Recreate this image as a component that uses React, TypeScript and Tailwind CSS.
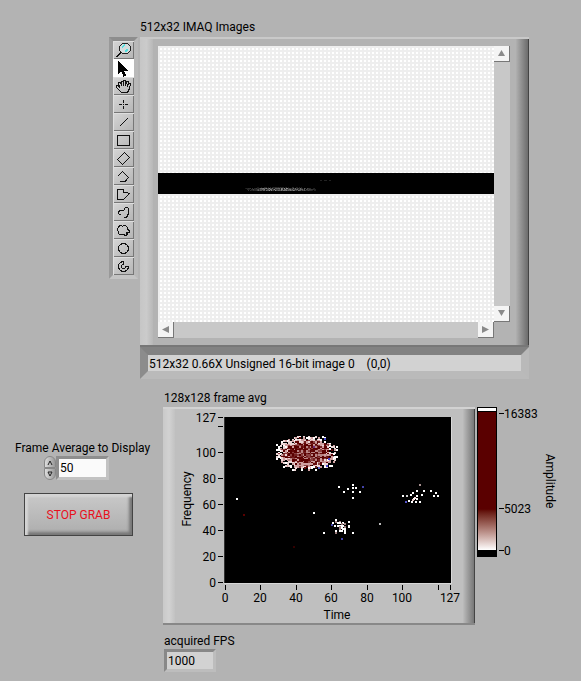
import React, { useId, useState } from "react";

const tools: { name: string; icon: React.ReactNode }[] = [
  {
    name: "Zoom",
    icon: (
      <>
        <circle cx="12" cy="7.5" r="5.5" fill="#d4dcdc" stroke="#222" />
        <path d="M9 6.500l3-3M12 10.500l3-2" stroke="#4fe0e0" strokeWidth="2" />
        <path d="M8 11.500l-4.500 4.500" stroke="#111" strokeWidth="2" />
      </>
    ),
  },
  {
    name: "Select",
    icon: <path d="M5 2v13l3-3 2.500 5.500 3-1-2.500-4.500h4z" fill="#000" stroke="none" />,
  },
  { name: "Pan", icon: <path d="M8.500 15.500l-5-5v-2h2l1 2-1-5h2l1 3v-4h2v4-5h2v5l1-4h2l-1 5 1-3h2l-1 5-2 4z" /> },
  { name: "Point", icon: <path d="M10.500 5v3M10.500 11v3M6 9.500h3M12 9.500h3M10 9.500h1" /> },
  { name: "Line", icon: <path d="M6.500 13.500l8-8" /> },
  { name: "Rectangle", icon: <rect x="4.500" y="4.500" width="12" height="10" /> },
  { name: "Rotated rectangle", icon: <path d="M4.500 10.500L11.500 3.500L16.500 8.500L9.500 15.500z" /> },
  { name: "Polyline", icon: <path d="M4.500 9.500l5-5 6 6-3 3.500H6.500" /> },
  { name: "Polygon", icon: <path d="M4.500 4.500h6v3h3l3 1-6 6h-6z" /> },
  { name: "Freehand line", icon: <path d="M7.500 11.500h-1l-1-1v-2l2-1h3l2-3h2l1 1v5l-2 4h-3" /> },
  {
    name: "Freehand region",
    icon: <path d="M6.500 4.500h2l1 1 1-1h2l2 2v2l2 1v2l-3 0 1 2-2 1-2-1h-4l-1-1v-2l-1-1v-2l1-1z" />,
  },
  { name: "Oval", icon: <circle cx="10.500" cy="9.500" r="5" /> },
  { name: "Annulus", icon: <path d="M10.500 4.500A5 5 0 1 0 15.500 9.500H12.500A2 2 0 1 1 10.500 7.500z" /> },
];

function ToolPalette() {
  const [active, setActive] = useState("Select");
  return (
    <div className="self-start border-4 border-t-[#8d8d8d] border-r-[#b9b9b9] border-b-[#c4c4c4] border-l-[#999]">
      <div role="toolbar" aria-label="Region tools" className="flex w-[21px] flex-col">
        {tools.map((t) => (
          <button
            key={t.name}
            type="button"
            aria-label={t.name}
            aria-pressed={active === t.name}
            onClick={() => setActive(t.name)}
            className={
              active === t.name
                ? "h-[18px] bg-white"
                : "h-[18px] bg-linear-to-br from-[#d6d6d6] to-[#b4b4b4] shadow-[inset_1px_1px_0_#dedede,inset_-1px_-1px_0_#777]"
            }
          >
            <svg
              width="21"
              height="18"
              fill="none"
              stroke="#111"
              strokeWidth="1"
              shapeRendering="crispEdges"
            >
              {t.icon}
            </svg>
          </button>
        ))}
      </div>
    </div>
  );
}

const arrowPaths = {
  up: "M7.500 4L11 10H4z",
  down: "M4 4h7l-3.500 6z",
  left: "M11 4v7L4 7.500z",
  right: "M4 4v7l7-3.500z",
};

function ScrollButton({ dir }: { dir: keyof typeof arrowPaths }) {
  return (
    <button
      type="button"
      aria-label={"Scroll " + dir}
      className="size-4 shrink-0 bg-[#f4f4f4] shadow-[inset_-1px_-1px_0_#777]"
    >
      <svg width="16" height="16" fill="#8a8a8a">
        <path d={arrowPaths[dir]} />
      </svg>
    </button>
  );
}

// Deterministic noise, so that every paint shows the same frame.
function noise(a: number, b: number) {
  const v = Math.sin(a * 127.1 + b * 311.7) * 43758.5453;
  return v - Math.floor(v);
}

function LineImage() {
  const marks: React.ReactNode[] = [];
  for (let x = 0; x < 84; x++) {
    for (let y = 14; y < 18; y++) {
      const level = Math.min(1, 1.4 * Math.max(0, 1 - Math.abs(x - 44) / 42)) * (y > 14 ? 1 : 0.3);
      const v = Math.round((0.2 + noise(x, y) * 0.8) * level * 150);
      if (v > 24) marks.push(<rect key={x + "-" + y} x={x} y={y} width="1" height="1" fill={`rgb(${v},${v},${v})`} />);
    }
  }
  return (
    <svg className="block pl-[78px]" width="180" height="21" shapeRendering="crispEdges">
      {marks}
      <path d="M84 7.500h2M88 7.500h3M93 7.500h2" stroke="#222" />
    </svg>
  );
}

function ImageDisplay() {
  return (
    <div className="min-w-0 flex-1">
      <div className="flex h-[310px] border-t-2 border-b-2 border-t-[#c9c9c9] border-b-[#777] bg-[#b3b3b3]">
        <div className="w-[13px] bg-linear-to-r from-[#c6c6c6] via-[#cbcbcb] to-[#b8b8b8]" />
        <div className="flex min-w-0 flex-1 pt-[7px] pl-[5px]">
          <div className="min-w-0 flex-1">
            <div className="flex h-[276px] flex-col bg-[conic-gradient(from_90deg,#fff_25%,#eee_0)] bg-[length:4px_4px] pt-[127px]">
              <div className="h-[21px] bg-black">
                <LineImage />
              </div>
            </div>
            <div className="flex justify-between bg-[#c8c8c8]">
              <ScrollButton dir="left" />
              <ScrollButton dir="right" />
            </div>
          </div>
          <div className="flex h-[276px] flex-col justify-between bg-[#c8c8c8]">
            <ScrollButton dir="up" />
            <ScrollButton dir="down" />
          </div>
        </div>
        <div className="ml-[6px] w-[13px] border-r border-[#444] bg-linear-to-r from-[#b0b0b0] to-[#6c6c6c]" />
      </div>
      <div className="border-8 border-t-[#828282] border-r-[#b9b9b9] border-b-[#bababa] border-l-[#8c8c8c] bg-[#d2d2d2]">
        <p className="h-4 pl-px text-xs leading-[18px]">512x32 0.66X Unsigned 16-bit image 0&nbsp;&nbsp;&nbsp;&nbsp;(0,0)</p>
      </div>
    </div>
  );
}

const specks: [number, number, string][] = [
  [11, 81, "#fff"], [18, 97, "#5a0000"], [88, 95, "#fff"], [68, 129, "#300"], [154, 106, "#bbb"],
  [113, 69, "#fff"], [122, 71, "#fff"], [118, 74, "#fff"], [127, 67, "#fff"], [127, 70, "#fff"], [130, 70, "#fff"],
  [127, 74, "#fff"], [127, 80, "#fff"], [134, 74, "#fff"], [137, 69, "#44a"],
  [194, 67, "#a89090"], [205, 73, "#fff"], [210, 75, "#fff"], [208, 78, "#fff"], [212, 78, "#fff"], [198, 73, "#fff"],
  [191, 73, "#fff"], [187, 75, "#fff"], [196, 77, "#fff"], [185, 77, "#fff"], [191, 78, "#fff"], [177, 78, "#fff"],
  [181, 78, "#ccc"], [189, 80, "#fdd"], [188, 81, "#fff"], [183, 83, "#fff"], [186, 84, "#fff"], [190, 84, "#fff"],
  [191, 81, "#fff"], [194, 84, "#fff"], [180, 84, "#55c"], [187, 82, "#ecc"],
  [98, 115, "#fff"], [106, 107, "#44a"], [116, 121, "#44a"], [127, 115, "#fff"], [119, 115, "#fff"], [123, 104, "#fff"],
  [99, 21, "#4444cc"], [103, 41, "#4444cc"], [101, 48, "#4444cc"], [93, 50, "#6666cc"], [88, 29, "#6a2a7a"],
];

function intensityCells() {
  const cells: React.ReactNode[] = [];
  const put = (x: number, y: number, fill: string) =>
    cells.push(<rect key={cells.length} x={Math.round(x)} y={Math.round(y)} width="2" height="1.500" fill={fill} />);
  for (let r = 0; r < 26; r++) {
    for (let c = 0; c < 35; c++) {
      const d = Math.hypot((c - 17) / 17, (r - 12.5) / 12.5);
      const n = noise(c + 3, r + 7);
      const m = noise(c + 61, r + 23);
      if (d + n * 0.45 > 1.17) continue;
      const edge = d + (m - 0.5) * 0.5;
      const tones = ["#b88484", "#8a4040", "#722020", "#5a0000", "#5a0000", "#640808"];
      const fill =
        edge > 1.03 ? "#fff" : edge > 0.85 ? "#ecd6d6" : edge > 0.72 ? "#cfa0a0" : tones[Math.floor(noise(r + 5, c + 11) * 6)];
      put(51 + c * 1.77, 19 + r * 1.3, fill);
    }
  }
  for (let r = 0; r < 12; r++) {
    for (let c = 0; c < 12; c++) {
      const d = Math.hypot((c - 5.5) / 6, (r - 6) / 6);
      if (noise(c + 40, r + 9) > 0.4 + d * 0.6) put(105 + c * 1.77, 101 + r * 1.3, noise(c, r) > 0.7 ? "#a08080" : "#fff");
    }
  }
  specks.forEach(([x, y, f]) => put(x, y, f));
  return cells;
}

const yTicks = [
  [10, "127"], [19, ""], [45, "100"], [71, "80"], [97, "60"], [123, "40"], [149, "20"], [175, "0"],
] as const;
const xTicks = [
  [225, "0"], [260, "20"], [296, "40"], [331, "60"], [367, "80"], [402, "100"], [438, ""], [450, "127"],
] as const;

function IntensityGraph() {
  return (
    <div className="flex h-[218px] w-[312px] border-t-2 border-b-2 border-t-[#d2d2d2] border-b-[#888] bg-[#bfbfbf]">
      <div className="w-[12px] shrink-0 bg-linear-to-r from-[#c9c9c9] via-[#d2d2d2] to-[#c2c2c2]" />
      <svg width="288" height="214" className="shrink-0 text-xs" role="img" aria-label="128x128 frame avg">
        <rect x="49" y="8" width="228" height="167" fill="#d8d8d8" />
        <rect x="49" y="8" width="227" height="166" fill="#333" />
        <rect x="50" y="8" width="226" height="166" fill="#000" />
        <g shapeRendering="crispEdges" transform="translate(50 8)">
          {intensityCells()}
        </g>
        {yTicks.map(([y, t]) => (
          <g key={y}>
            <rect x="43" y={y - 2} width="5" height="1" fill="#000" />
            <text x="41" y={y + 3} textAnchor="end">
              {t}
            </text>
          </g>
        ))}
        {xTicks.map(([x, t]) => (
          <g key={x}>
            <rect x={x - 175} y="176" width="1" height="5" fill="#000" />
            <text x={x - 175} y="193" textAnchor="middle">
              {t}
            </text>
          </g>
        ))}
        <text x="162" y="210" textAnchor="middle">
          Time
        </text>
        <text transform="translate(16 90) rotate(-90)" textAnchor="middle">
          Frequency
        </text>
      </svg>
      <div className="min-w-0 flex-1 border-r border-[#444] bg-linear-to-r from-[#bcbcbc] to-[#777]" />
    </div>
  );
}

function ColorRamp() {
  return (
    <div className="flex">
      <div className="flex h-[150px] w-5 flex-col border border-black bg-black">
        <div className="mb-px h-[3px] bg-white" />
        <div className="h-[97px] bg-[#5a0000]" />
        <div className="h-[41px] bg-linear-to-b from-[#5a0000] to-white" />
      </div>
      <svg width="84" height="160" className="overflow-visible text-xs" role="img" aria-label="Amplitude scale">
        <path d="M2 6.500h5M2 101.500h5M2 143.500h5" stroke="#000" />
        <text x="7" y="11">16383</text>
        <text x="7" y="106">5023</text>
        <text x="7" y="148">0</text>
        <text transform="translate(49 74) rotate(90)" textAnchor="middle">
          Amplitude
        </text>
      </svg>
    </div>
  );
}

function FrameAverage() {
  const id = useId();
  const [value, setValue] = useState("50");
  const step = (n: number) => setValue(String((Number(value) || 0) + n));
  return (
    <div>
      <label htmlFor={id} className="block pl-[15px] text-xs leading-4 whitespace-nowrap">
        Frame Average to Display
      </label>
      <div className="flex pl-11">
        <div className="flex w-3 flex-col">
          <button
            type="button"
            aria-label="Increase"
            onClick={() => step(1)}
            className="h-3 rounded-t-full border border-[#888] bg-linear-to-r from-[#ddd] to-[#999]"
          >
            <svg width="10" height="10" fill="none" stroke="#222">
              <path d="M3 8l2-4 2 4" />
            </svg>
          </button>
          <button
            type="button"
            aria-label="Decrease"
            onClick={() => step(-1)}
            className="h-3 rounded-b-full border border-[#888] bg-linear-to-r from-[#ddd] to-[#999]"
          >
            <svg width="10" height="10" fill="none" stroke="#222">
              <path d="M3 3h4l-2 4z" />
            </svg>
          </button>
        </div>
        <input
          id={id}
          value={value}
          onChange={(e) => setValue(e.target.value)}
          className="h-6 w-[53px] border-3 border-t-[#8e8e8e] border-r-[#c2c2c2] border-b-[#c2c2c2] border-l-[#8e8e8e] bg-[#fafafa] pl-px text-xs"
        />
      </div>
    </div>
  );
}

export default function App() {
  return (
    <main className="min-h-screen bg-[#b3b3b3] pt-[18px] font-[Roboto,'Noto_Sans',sans-serif] text-xs text-black">
      <section className="pr-[52px] pl-[109px]">
        <h2 className="h-[19px] pl-[31px] leading-[18px]">512x32 IMAQ Images</h2>
        <div className="flex gap-[2px]">
          <ToolPalette />
          <ImageDisplay />
        </div>
      </section>
      <section className="flex pt-[10px]">
        <div className="w-[163px] shrink-0 pt-[51px]">
          <FrameAverage />
          <button
            type="button"
            className="mt-[13px] ml-6 h-[43px] w-[109px] border border-[#444] bg-linear-to-b from-[#c9c9c9] to-[#adadad] text-[#e8101c] shadow-[inset_3px_3px_2px_#d4d4d4,inset_-3px_-3px_3px_#777]"
          >
            STOP GRAB
          </button>
        </div>
        <div className="flex-1">
          <h2 className="h-[18px] pl-px leading-[18px]">128x128 frame avg</h2>
          <div className="flex gap-[2px]">
            <IntensityGraph />
            <ColorRamp />
          </div>
          <label htmlFor="fps" className="mt-2 block pl-px leading-4">
            acquired FPS
          </label>
          <input
            id="fps"
            readOnly
            value="1000"
            className="ml-px block h-[23px] w-[52px] border-3 border-t-[#888] border-r-[#bdbdbd] border-b-[#bdbdbd] border-l-[#888] bg-[#d2d2d2] pl-px"
          />
        </div>
      </section>
    </main>
  );
}
